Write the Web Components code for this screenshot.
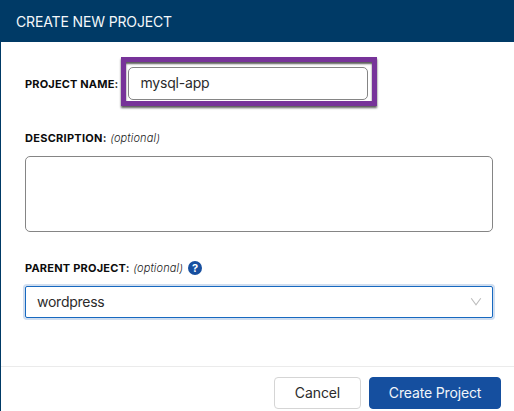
<!DOCTYPE html>
<html lang="en">
<head>
<meta charset="utf-8">
<title>Create New Project</title>
<style>
html,body{margin:0;height:100%;overflow:hidden;background:#fff}
body{font-family:Inter,"Liberation Sans",sans-serif;font-size:14px;color:#2b2b2b}
</style>
</head>
<body>
<project-dialog heading="CREATE NEW PROJECT">
  <form-row class="name" inline>
    <field-label slot="label" text="PROJECT NAME:" style="--ls:.16px"></field-label>
    <focus-frame><text-box>mysql-app</text-box></focus-frame>
  </form-row>
  <form-row class="desc">
    <field-label slot="label" text="DESCRIPTION:" style="--ls:.27px">(optional)</field-label>
    <text-box style="--h:76px"></text-box>
  </form-row>
  <form-row class="parent">
    <field-label slot="label" text="PARENT PROJECT:" style="--ls:.22px">(optional)<help-icon slot="help"></help-icon></field-label>
    <select-box>wordpress</select-box>
  </form-row>
  <push-button slot="actions" style="--w:87px;--ls:-.1px">Cancel</push-button>
  <push-button slot="actions" primary style="--w:132px;--ls:-.15px">Create Project</push-button>
</project-dialog>
<script>
const define = (name, html) => customElements.define(name, class extends HTMLElement {
  constructor() {
    super();
    this.attachShadow({mode: 'open'}).innerHTML = html;
  }
  connectedCallback() {
    const t = this.shadowRoot.querySelector('[data-attr]');
    if (t) t.textContent = this.getAttribute(t.dataset.attr);
  }
});

define('project-dialog', `<style>
:host{display:flex;flex-direction:column;box-sizing:border-box;height:411px;border-left:1px solid #003a66;background:#fff}
header{flex:none;box-sizing:border-box;height:42px;background:#003a66;color:#f4f7fa;display:flex;align-items:center;padding:0 0 0 15px;font-size:14px;letter-spacing:-.14px}
main{flex:none;box-sizing:border-box;height:324px;padding:15px 20px 0 24px}
footer{flex:1;border-top:1px solid #ebebeb;display:flex;justify-content:flex-end;gap:8px;padding:10px 13px 0 0}
</style><header><span data-attr="heading"></span></header><main><slot></slot></main><footer><slot name="actions"></slot></footer>`);

define('form-row', `<style>
:host{display:flex;flex-direction:column;margin-bottom:26px;gap:8px}
:host([inline]){flex-direction:row;align-items:center;gap:0;margin-bottom:22px}
:host([inline]) .label{width:96px;padding-top:4px}
</style><div class="label"><slot name="label"></slot></div><slot></slot>`);

define('field-label', `<style>
:host{display:flex;align-items:center;height:20px;font-size:11px;color:#0c0c0c;white-space:nowrap}
b{font-weight:700;letter-spacing:var(--ls,.3px)}
i{margin-left:3.5px;font-weight:300;color:#222;letter-spacing:.12px}
slot[name=help]{display:block;margin-left:5px}
</style><b data-attr="text"></b><i><slot></slot></i><slot name="help"></slot>`);

define('focus-frame', `<style>
:host{display:block;box-sizing:border-box;width:256px;height:49px;border:5px solid #773399;padding:5px 4px 0 2px;
box-shadow:0 2px 2px rgba(0,0,0,.65),inset 0 2px 2px rgba(0,0,0,.65)}
</style><slot></slot>`);

define('text-box', `<style>
:host{display:flex;align-items:center;box-sizing:border-box;height:var(--h,33px);width:100%;max-width:468px;border:1px solid #858585;border-radius:5px;padding:0 12px 2px 11.5px;background:#fff;letter-spacing:-.2px}
</style><span><slot></slot></span>`);

define('select-box', `<style>
:host{display:flex;align-items:center;justify-content:space-between;box-sizing:border-box;height:32px;width:468px;border:1px solid #1769c0;border-radius:2px;padding:0 10px 0 11px;box-shadow:0 0 0 2px #d0def0;letter-spacing:-.25px}
span{padding-bottom:2px}
svg{display:block}
</style><span><slot></slot></span><svg width="12" height="12" viewBox="0 0 12 12" fill="none" stroke="#bdbdbd" stroke-width="1.1"><path d="M1.2 2.3 6 8.9 10.8 2.3"/></svg>`);

define('help-icon', `<style>
:host{display:flex;align-items:center;justify-content:center;width:14px;height:14px;border-radius:50%;background:#174f9f;color:#fff;font-size:11px;font-weight:700;line-height:14px}
</style><span>?</span>`);

define('push-button', `<style>
:host{display:flex;align-items:center;justify-content:center;box-sizing:border-box;width:var(--w);height:32px;border:1px solid #d5d5d5;border-radius:4px;background:#fff;letter-spacing:var(--ls)}
:host([primary]){background:#154f9f;border-color:#154f9f;color:#f1f5fa}
span{padding-bottom:1px}
</style><span><slot></slot></span>`);
</script>
</body>
</html>
